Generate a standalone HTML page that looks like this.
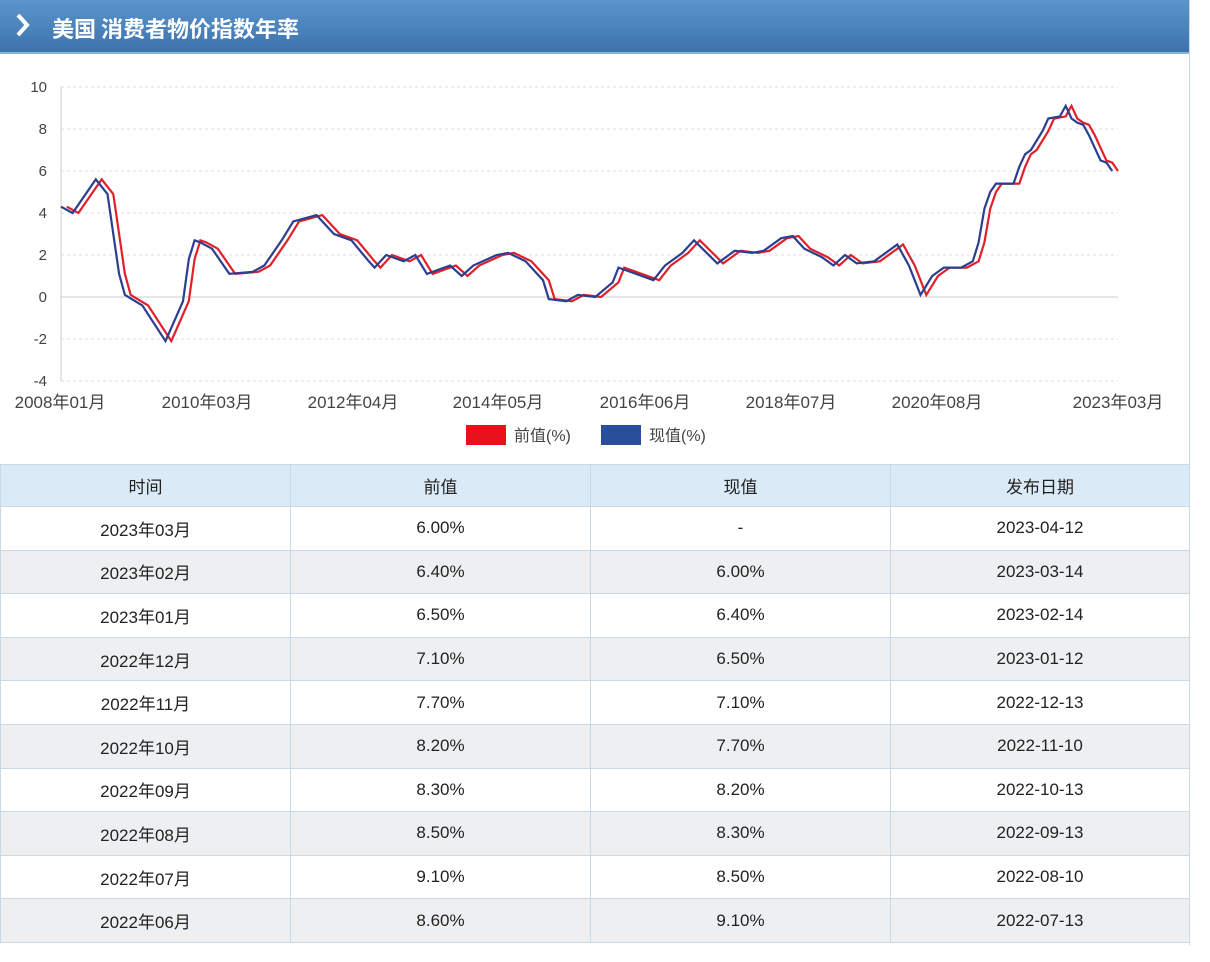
<!DOCTYPE html>
<html><head><meta charset="utf-8"><style>
body{margin:0;width:1210px;height:962px;background:#fff;font-family:"Liberation Sans","Noto Sans CJK SC",sans-serif;position:relative;overflow:hidden}
.title{position:absolute;left:0;top:0;width:1190px;height:52px;background:linear-gradient(#5b95cc,#3d73ad);border-bottom:2px solid #8bb4dc}
.title span{position:absolute;left:52px;top:12px;color:#fff;font-size:22px;font-weight:bold;font-family:"Noto Sans CJK SC",sans-serif}
.frame{position:absolute;left:1189px;top:0;width:1px;height:945px;background:#c9d6e3}
svg{position:absolute;left:0;top:0}
table{position:absolute;left:0;top:464px;width:1190px;border-collapse:collapse;font-size:17px;color:#222}
td{border:1px solid #c9d9e6;height:42.6px;text-align:center;padding:0}
tr.h td{background:#dbeaf7;height:41px}
tr.g td{background:#eeeff1}
</style></head><body>
<div class="title"><svg width="30" height="52" style="left:14px"><path d="M4 15 L13 25 L4 35" stroke="#fff" stroke-width="4" fill="none"/></svg><span>美国 消费者物价指数年率</span></div>
<div class="frame"></div>
<svg width="1189" height="462" style="top:0">
<g stroke="#ddd" stroke-dasharray="3,3">
<line x1="61" x2="1118" y1="87" y2="87"/><line x1="61" x2="1118" y1="129" y2="129"/><line x1="61" x2="1118" y1="171" y2="171"/><line x1="61" x2="1118" y1="213" y2="213"/><line x1="61" x2="1118" y1="255" y2="255"/><line x1="61" x2="1118" y1="339" y2="339"/><line x1="61" x2="1118" y1="381" y2="381"/></g>
<line x1="61" x2="1118" y1="297" y2="297" stroke="#ccc"/>
<line x1="61" x2="61" y1="87" y2="381" stroke="#ccc"/>
<g font-size="15" fill="#444" text-anchor="end"><text x="47" y="92">10</text><text x="47" y="134">8</text><text x="47" y="176">6</text><text x="47" y="218">4</text><text x="47" y="260">2</text><text x="47" y="302">0</text><text x="47" y="344">-2</text><text x="47" y="386">-4</text></g>
<g font-size="17" fill="#444" text-anchor="middle"><text x="60" y="408">2008年01月</text><text x="207" y="408">2010年03月</text><text x="353" y="408">2012年04月</text><text x="498" y="408">2014年05月</text><text x="645" y="408">2016年06月</text><text x="791" y="408">2018年07月</text><text x="937" y="408">2020年08月</text><text x="1118" y="408">2023年03月</text></g>
<rect x="466" y="425" width="40" height="20" fill="#e8101a"/><text x="514" y="441" font-size="16" fill="#444">前值(%)</text>
<rect x="601" y="425" width="40" height="20" fill="#2a4f9a"/><text x="649" y="441" font-size="16" fill="#444">现值(%)</text>
<polyline id="red" fill="none" stroke="#e0202a" stroke-width="2.2"/>
<polyline id="blue" fill="none" stroke="#2a3f8f" stroke-width="2.2"/>
</svg>
<table>
<tr class="h"><td style="width:289px">时间</td><td style="width:299px">前值</td><td style="width:299px">现值</td><td>发布日期</td></tr>
<tr><td>2023年03月</td><td>6.00%</td><td>-</td><td>2023-04-12</td></tr>
<tr class="g"><td>2023年02月</td><td>6.40%</td><td>6.00%</td><td>2023-03-14</td></tr>
<tr><td>2023年01月</td><td>6.50%</td><td>6.40%</td><td>2023-02-14</td></tr>
<tr class="g"><td>2022年12月</td><td>7.10%</td><td>6.50%</td><td>2023-01-12</td></tr>
<tr><td>2022年11月</td><td>7.70%</td><td>7.10%</td><td>2022-12-13</td></tr>
<tr class="g"><td>2022年10月</td><td>8.20%</td><td>7.70%</td><td>2022-11-10</td></tr>
<tr><td>2022年09月</td><td>8.30%</td><td>8.20%</td><td>2022-10-13</td></tr>
<tr class="g"><td>2022年08月</td><td>8.50%</td><td>8.30%</td><td>2022-09-13</td></tr>
<tr><td>2022年07月</td><td>9.10%</td><td>8.50%</td><td>2022-08-10</td></tr>
<tr class="g"><td>2022年06月</td><td>8.60%</td><td>9.10%</td><td>2022-07-13</td></tr>
</table>
<script>
var k=[[2008,1,4.3],[2008,3,4.0],[2008,7,5.6],[2008,9,4.9],[2008,11,1.1],[2008,12,0.1],[2009,3,-0.4],[2009,7,-2.1],[2009,10,-0.2],[2009,11,1.8],[2009,12,2.7],[2010,1,2.6],[2010,3,2.3],[2010,6,1.1],[2010,10,1.2],[2010,12,1.5],[2011,3,2.7],[2011,5,3.6],[2011,9,3.9],[2011,12,3.0],[2012,3,2.7],[2012,6,1.7],[2012,7,1.4],[2012,9,2.0],[2012,12,1.7],[2013,2,2.0],[2013,4,1.1],[2013,8,1.5],[2013,10,1.0],[2013,12,1.5],[2014,4,2.0],[2014,6,2.1],[2014,9,1.7],[2014,12,0.8],[2015,1,-0.1],[2015,4,-0.2],[2015,6,0.1],[2015,9,0.0],[2015,12,0.7],[2016,1,1.4],[2016,4,1.1],[2016,7,0.8],[2016,9,1.5],[2016,12,2.1],[2017,2,2.7],[2017,6,1.6],[2017,9,2.2],[2017,12,2.1],[2018,2,2.2],[2018,5,2.8],[2018,7,2.9],[2018,9,2.3],[2018,12,1.9],[2019,2,1.5],[2019,4,2.0],[2019,6,1.6],[2019,9,1.7],[2019,12,2.3],[2020,1,2.5],[2020,3,1.5],[2020,5,0.1],[2020,7,1.0],[2020,9,1.4],[2020,12,1.4],[2021,2,1.7],[2021,3,2.6],[2021,4,4.2],[2021,5,5.0],[2021,6,5.4],[2021,9,5.4],[2021,10,6.2],[2021,11,6.8],[2021,12,7.0],[2022,2,7.9],[2022,3,8.5],[2022,5,8.6],[2022,6,9.1],[2022,7,8.5],[2022,8,8.3],[2022,9,8.2],[2022,10,7.7],[2022,11,7.1],[2022,12,6.5],[2023,1,6.4],[2023,2,6.0]];
var m=k.map(function(a){return [(a[0]-2008)*12+a[1]-1,a[2]]});
function pts(sh){var s=[];for(var i=0;i<m.length;i++){s.push(((m[i][0]+sh)*1057/182+61).toFixed(1)+","+(297-m[i][1]*21).toFixed(1));}return s.join(" ");}
document.getElementById("blue").setAttribute("points",pts(0));
document.getElementById("red").setAttribute("points",pts(1));
</script>
</body></html>
